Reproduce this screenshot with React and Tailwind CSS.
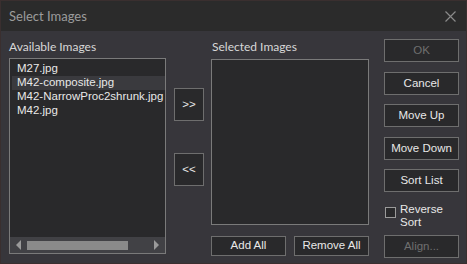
import React from "react";

const btnFont = { fontFamily: '"Liberation Sans", Arial, sans-serif' };
const uiFont = { fontFamily: 'Lato, "Noto Sans", sans-serif' };

function Btn({ children, disabled, className = "" }) {
  return (
    <div
      className={`flex items-center justify-center border border-[#6e6e6e] bg-[#29292b] text-[11.5px] leading-none ${
        disabled ? "text-[#6f6f6f]" : "text-[#e8e8e8]"
      } ${className}`}
      style={btnFont}
    >
      {children}
    </div>
  );
}

export default function App() {
  const items = ["M27.jpg", "M42-composite.jpg", "M42-NarrowProc2shrunk.jpg", "M42.jpg"];
  return (
    <div className="w-[467px] h-[264px] border border-[#3a2f2f] bg-[#37363b] flex flex-col overflow-hidden select-none">
      {/* title bar */}
      <div className="h-[30px] bg-[#2b2b2b] flex items-center justify-between pl-[8px] pr-[10px] shrink-0">
        <span className="text-[13px] text-[#9c9c9c] leading-none" style={uiFont}>
          Select Images
        </span>
        <svg width="11" height="11" viewBox="0 0 11 11" className="mt-[1px]">
          <path d="M0.5 0.5 L10.5 10.5 M10.5 0.5 L0.5 10.5" stroke="#8a8a8a" strokeWidth="1.2" />
        </svg>
      </div>

      {/* body */}
      <div className="flex flex-row pl-[8px] pt-[8px]">
        {/* left column */}
        <div className="w-[157px] flex flex-col">
          <div className="h-[19px] text-[12px] text-[#d8d8d8] leading-none pt-[2px]" style={uiFont}>
            Available Images
          </div>
          <div className="h-[196px] border border-[#7a7a7a] bg-[#29292b] flex flex-col">
            <div className="flex-1 pt-[3px] pl-[2px] overflow-hidden">
              {items.map((it, i) => (
                <div
                  key={it}
                  className={`h-[14px] pl-[5px] flex items-center whitespace-nowrap text-[11.5px] text-[#e8e8e8] ${
                    i === 1 ? "bg-[#3a3a3e]" : ""
                  }`}
                  style={btnFont}
                >
                  {it}
                </div>
              ))}
            </div>
            <div className="h-[16px] bg-[#414145] flex items-center px-[6px] gap-[5px]">
              <svg width="6" height="10" viewBox="0 0 6 10">
                <path d="M5 0 L0 5 L5 10 Z" fill="#9a9a9a" />
              </svg>
              <div className="w-[101px] h-[9px] bg-[#8a8a8a]" />
              <div className="flex-1" />
              <svg width="6" height="10" viewBox="0 0 6 10">
                <path d="M1 0 L6 5 L1 10 Z" fill="#9a9a9a" />
              </svg>
            </div>
          </div>
        </div>

        {/* middle column */}
        <div className="w-[30px] ml-[8px] flex flex-col pt-[49px]">
          <Btn className="h-[33px]">&gt;&gt;</Btn>
          <Btn className="h-[33px] mt-[32px]">&lt;&lt;</Btn>
        </div>

        {/* selected column */}
        <div className="w-[158px] ml-[7px] flex flex-col">
          <div className="h-[20px] text-[12px] text-[#d8d8d8] leading-none pt-[2px] pl-[1px]" style={uiFont}>
            Selected Images
          </div>
          <div className="h-[166px] border border-[#7a7a7a] bg-[#29292b]" />
          <div className="flex flex-row justify-between mt-[11px]">
            <Btn className="w-[75px] h-[20px]">Add All</Btn>
            <Btn className="w-[75px] h-[20px]">Remove All</Btn>
          </div>
        </div>

        {/* right buttons */}
        <div className="w-[75px] ml-[15px] flex flex-col">
          <Btn disabled className="h-[23px]">OK</Btn>
          <Btn className="h-[23px] mt-[10px]">Cancel</Btn>
          <Btn className="h-[23px] mt-[9px]">Move Up</Btn>
          <Btn className="h-[23px] mt-[10px]">Move Down</Btn>
          <Btn className="h-[23px] mt-[9px]">Sort List</Btn>
          <div className="flex flex-row items-start mt-[11px] h-[30px]">
            <div className="w-[11px] h-[11px] border border-[#9a9a9a] bg-[#29292b] mt-[4px] ml-[1px]" />
            <div className="ml-[4px] text-[11.5px] leading-[13px] text-[#e8e8e8]" style={btnFont}>
              Reverse
              <br />
              Sort
            </div>
          </div>
          <Btn disabled className="h-[23px] mt-[2px]">Align...</Btn>
        </div>
      </div>
    </div>
  );
}
